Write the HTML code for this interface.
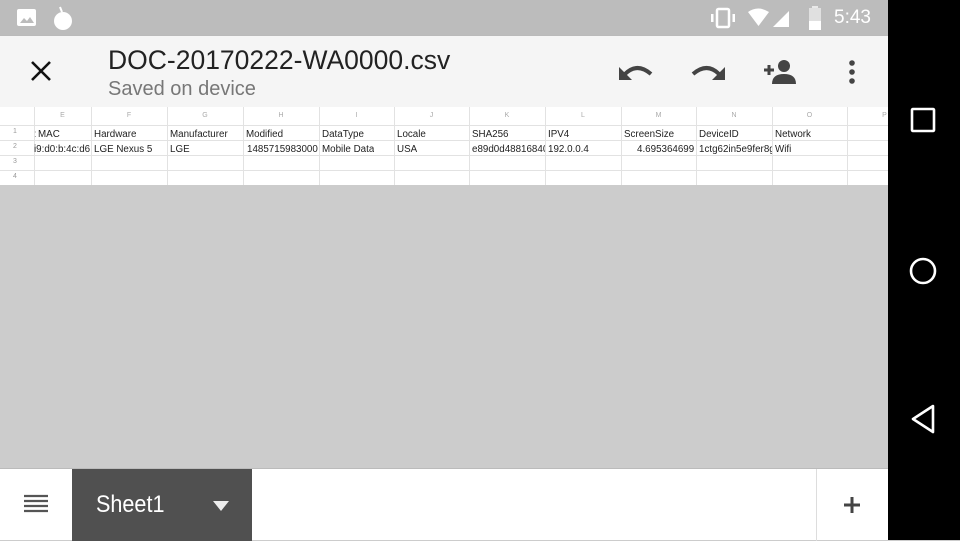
<!DOCTYPE html>
<html><head><style>
*{margin:0;padding:0;box-sizing:border-box}
body{width:960px;height:540px;overflow:hidden;background:#ccc;font-family:"Liberation Sans",sans-serif;position:relative}
.abs{position:absolute}
#status{left:0;top:0;width:888px;height:36px;background:#bcbcbc}
#tool{left:0;top:36px;width:888px;height:71px;background:#f5f5f5;box-shadow:0 2px 3px rgba(0,0,0,.25)}
#nav{left:888px;top:0;width:72px;height:540px;background:#000}
#grid{left:0;top:107px;width:888px;height:78px;background:#fff}
.v{position:absolute;top:0;width:1px;height:78px;background:#e2e2e2}
.h{position:absolute;left:0;width:888px;height:1px;background:#e2e2e2}
.t{position:absolute;font-size:9.8px;color:#222;white-space:nowrap;overflow:hidden}
.c{position:absolute;font-size:7px;color:#aaa;text-align:center}
.n{position:absolute;font-size:7px;color:#999;left:13px}
#bottom{left:0;top:468px;width:888px;height:72px;background:#fff;border-top:1px solid #bbb}
</style></head><body>
<div id="status" class="abs">
 <svg class="abs" style="left:17px;top:9px" width="20" height="18"><rect x="0" y="0" width="19" height="17" rx="2" fill="#fff"/><path d="M3 14 L7 9 L10 12 L13 8 L17 14Z" fill="#bcbcbc"/></svg>
 <svg class="abs" style="left:52px;top:5px" width="22" height="26"><circle cx="11" cy="16" r="9" fill="#fff"/><path d="M10 7 L8 2" stroke="#fff" stroke-width="2"/></svg>
 <svg class="abs" style="left:708px;top:7px" width="30" height="22"><rect x="9" y="2" width="12" height="18" rx="1.5" fill="none" stroke="#fff" stroke-width="2.5"/><rect x="3" y="7" width="2.5" height="8" fill="#fff"/><rect x="24.5" y="7" width="2.5" height="8" fill="#fff"/></svg>
 <svg class="abs" style="left:746px;top:8px" width="50" height="22"><path d="M2 4 Q12 -3 23 4 L12.5 18Z" fill="#fff"/><path d="M27 19 L43 19 L43 3Z" fill="#fff"/></svg>
 <svg class="abs" style="left:808px;top:6px" width="14" height="24"><rect x="4" y="0" width="6" height="3" fill="#e8e8e8"/><rect x="1" y="2" width="12" height="22" fill="#e0e0e0"/><rect x="1" y="15" width="12" height="9" fill="#fff"/></svg>
 <div class="abs" style="left:834px;top:7px;font-size:19px;color:#fff">5:43</div>
</div>
<div id="tool" class="abs">
 <svg class="abs" style="left:30px;top:24px" width="22" height="22"><path d="M2 2 L20 20 M20 2 L2 20" stroke="#111" stroke-width="2.6"/></svg>
 <div class="abs" style="left:108px;top:9px;font-size:26.5px;color:#222">DOC-20170222-WA0000.csv</div>
 <div class="abs" style="left:108px;top:42px;font-size:20px;color:#777">Saved on device</div>
 <svg class="abs" style="left:617px;top:26px" width="38" height="22"><path d="M8 12 Q20 0 34 12" fill="none" stroke="#444" stroke-width="4"/><path d="M2 5 L2 18 L15 18Z" fill="#444"/></svg>
 <svg class="abs" style="left:689px;top:26px" width="38" height="22"><path d="M4 12 Q18 0 30 12" fill="none" stroke="#444" stroke-width="4"/><path d="M36 5 L36 18 L23 18Z" fill="#444"/></svg>
 <svg class="abs" style="left:762px;top:21px" width="36" height="28"><path d="M2 13 H12 M7 8 V18" stroke="#444" stroke-width="3"/><circle cx="22" cy="9" r="6" fill="#444"/><path d="M10 27 Q10 17 22 17 Q34 17 34 27Z" fill="#444"/></svg>
 <svg class="abs" style="left:846px;top:22px" width="12" height="28"><circle cx="6" cy="5" r="2.8" fill="#444"/><circle cx="6" cy="14" r="2.8" fill="#444"/><circle cx="6" cy="23" r="2.8" fill="#444"/></svg>
</div>
<div id="grid" class="abs">
 <div class="h" style="top:18px"></div><div class="h" style="top:33px"></div><div class="h" style="top:48px"></div><div class="h" style="top:63px"></div>
 <div class="v" style="left:34px"></div><div class="v" style="left:91px"></div><div class="v" style="left:167px"></div><div class="v" style="left:243px"></div><div class="v" style="left:319px"></div><div class="v" style="left:394px"></div><div class="v" style="left:469px"></div><div class="v" style="left:545px"></div><div class="v" style="left:621px"></div><div class="v" style="left:696px"></div><div class="v" style="left:772px"></div><div class="v" style="left:847px"></div>
 <div class="c" style="left:34px;width:57px;top:5px">E</div><div class="c" style="left:91px;width:76px;top:5px">F</div><div class="c" style="left:167px;width:76px;top:5px">G</div><div class="c" style="left:243px;width:76px;top:5px">H</div><div class="c" style="left:319px;width:75px;top:5px">I</div><div class="c" style="left:394px;width:75px;top:5px">J</div><div class="c" style="left:469px;width:76px;top:5px">K</div><div class="c" style="left:545px;width:76px;top:5px">L</div><div class="c" style="left:621px;width:75px;top:5px">M</div><div class="c" style="left:696px;width:76px;top:5px">N</div><div class="c" style="left:772px;width:75px;top:5px">O</div><div class="c" style="left:847px;width:75px;top:5px">P</div>
 <div class="n" style="top:21px">1</div><div class="n" style="top:36px">2</div><div class="n" style="top:51px">3</div><div class="n" style="top:66px">4</div>
 <div class="t" style="left:34px;top:22px;color:#999">:</div><div class="t" style="left:38px;top:22px">MAC</div>
 <div class="t" style="left:94px;top:22px">Hardware</div><div class="t" style="left:170px;top:22px">Manufacturer</div><div class="t" style="left:246px;top:22px">Modified</div><div class="t" style="left:322px;top:22px">DataType</div><div class="t" style="left:397px;top:22px">Locale</div><div class="t" style="left:472px;top:22px">SHA256</div><div class="t" style="left:548px;top:22px">IPV4</div><div class="t" style="left:624px;top:22px">ScreenSize</div><div class="t" style="left:699px;top:22px">DeviceID</div><div class="t" style="left:775px;top:22px">Network</div>
 <div class="t" style="left:34px;top:37px;width:57px">i9:d0:b:4c:d6</div><div class="t" style="left:94px;top:37px">LGE Nexus 5</div><div class="t" style="left:170px;top:37px">LGE</div><div class="t" style="left:247px;top:37px">1485715983000</div><div class="t" style="left:322px;top:37px">Mobile Data</div><div class="t" style="left:397px;top:37px">USA</div><div class="t" style="left:472px;top:37px;width:73px">e89d0d48816840</div><div class="t" style="left:548px;top:37px">192.0.0.4</div><div class="t" style="left:637px;top:37px">4.695364699</div><div class="t" style="left:699px;top:37px;width:73px">1ctg62in5e9fer8g</div><div class="t" style="left:775px;top:37px">Wifi</div>
</div>
<div id="bottom" class="abs">
 <svg class="abs" style="left:24px;top:25px" width="24" height="20"><path d="M0 2H24M0 7H24M0 12H24M0 17H24" stroke="#555" stroke-width="2.2"/></svg>
 <div class="abs" style="left:72px;top:0;width:180px;height:72px;background:#505050"></div>
 <div class="abs" style="left:96px;top:22px;font-size:24px;color:#fff;transform:scaleX(.9);transform-origin:left">Sheet1</div>
 <svg class="abs" style="left:212px;top:31px" width="18" height="12"><path d="M1 1H17L9 11Z" fill="#eee"/></svg>
 <div class="abs" style="left:816px;top:0;width:1px;height:72px;background:#ddd"></div>
 <svg class="abs" style="left:844px;top:28px" width="16" height="16"><path d="M8 0V16M0 8H16" stroke="#444" stroke-width="3"/></svg>
</div>
<div id="nav" class="abs">
 <svg class="abs" style="left:22px;top:107px" width="26" height="26"><rect x="2" y="2" width="22" height="22" rx="1" fill="none" stroke="#fff" stroke-width="2.6"/></svg>
 <svg class="abs" style="left:20px;top:256px" width="30" height="30"><circle cx="15" cy="15" r="12" fill="none" stroke="#fff" stroke-width="2.6"/></svg>
 <svg class="abs" style="left:22px;top:404px" width="26" height="30"><path d="M23 2 L3 15 L23 28Z" fill="none" stroke="#fff" stroke-width="2.6" stroke-linejoin="round"/></svg>
</div>
</body></html>
